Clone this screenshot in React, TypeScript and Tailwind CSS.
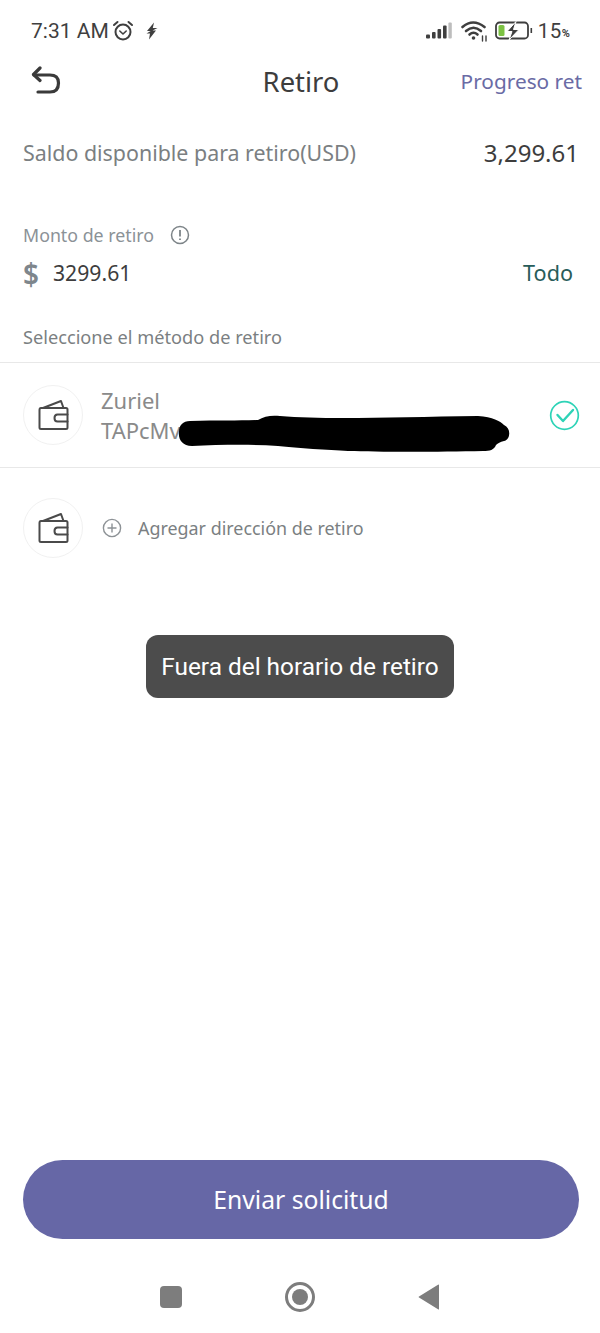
export default function App() {
  const Wallet = () => (
    <svg width="32" height="32" viewBox="0 0 32 32" fill="none" stroke="#4a4a4a" strokeWidth="2" strokeLinejoin="round" strokeLinecap="round">
      <path d="M2.5 11 L2.5 28.5 Q2.5 30 4 30 L29 30 Q30.5 30 30.5 28.5 L30.5 10.5 Q30.5 9 29 9 L4 9 Q2.5 9 2.5 11 Z" />
      <path d="M6 9 L24 2 L26.5 9" />
      <path d="M30.5 15.5 L20.5 15.5 Q17.5 15.5 17.5 19 Q17.5 22.5 20.5 22.5 L30.5 22.5" />
    </svg>
  );
  return (
    <div className="relative flex h-[1333px] w-[600px] flex-col overflow-hidden bg-white font-['Noto_Sans',sans-serif]">
      <div className="flex h-[61px] items-center justify-between pl-[31px] pr-[30px] pt-[1px] font-['Roboto',sans-serif] text-[#3f3f3f]">
        <div className="flex items-center">
          <span className="text-[21px] leading-none">7:31 AM</span>
          <svg className="ml-[3px]" width="22" height="22" viewBox="0 0 22 22" fill="none" stroke="#3f3f3f" strokeWidth="2" strokeLinecap="round" strokeLinejoin="round">
            <circle cx="11" cy="12" r="7.5" />
            <path d="M2 5 L5.5 2 M20 5 L16.5 2" />
            <path d="M7.8 11 L11 14 L14.2 11" strokeWidth="1.6" />
          </svg>
          <svg className="ml-[12px]" width="12" height="18" viewBox="0 0 12 18" fill="#3f3f3f">
            <path d="M8 0.5 L1 9 L4.7 9 L0.5 11.5 L4 11.5 L3 17.5 L10 8.5 L6.5 8.5 L11.5 6 L6.8 6 Z" />
          </svg>
        </div>
        <div className="flex items-center">
          <svg width="26" height="18" viewBox="0 0 26 18" fill="#3f3f3f">
            <rect x="0" y="12.5" width="4" height="4" rx="1" />
            <rect x="6" y="10" width="3.6" height="6.5" rx="1" />
            <rect x="11.5" y="7" width="3.6" height="9.5" rx="1" />
            <rect x="17" y="3.5" width="3.6" height="13" rx="1" />
            <rect x="22.4" y="0.5" width="3.4" height="16" rx="1" fill="#bdbdbd" />
          </svg>
          <svg className="ml-[9px]" width="28" height="22" viewBox="0 0 28 22" fill="none" stroke="#3f3f3f" strokeWidth="2.6" strokeLinecap="round">
            <path d="M1.5 7 Q12 -2 23.5 7" />
            <path d="M5 11 Q12.5 4.5 20 11" />
            <path d="M8.5 14.5 Q12.5 11 16.5 14.5" />
            <circle cx="12.5" cy="18" r="1.8" fill="#3f3f3f" stroke="none" />
            <path d="M21.5 16 V21 M25 16 V21" strokeWidth="1.4" />
          </svg>
          <svg className="ml-[6px]" width="38" height="20" viewBox="0 0 38 20" fill="none">
            <rect x="1" y="1.5" width="32" height="16" rx="3.5" stroke="#3f3f3f" strokeWidth="1.8" />
            <rect x="3.5" y="4" width="6" height="11" rx="1.5" fill="#7cc243" />
            <path d="M21 0.5 L12 10.5 L17 10.5 L14 19 L24 8.5 L18.5 8.5 Z" fill="#3f3f3f" stroke="#ffffff" strokeWidth="1" />
            <rect x="35.5" y="7" width="1.6" height="5" fill="#3f3f3f" />
          </svg>
          <span className="ml-[5px] text-[20.5px] leading-none tracking-[0.5px]">15</span>
          <span className="mt-[5px] text-[11px] font-bold leading-none">%</span>
        </div>
      </div>

      <div className="relative flex h-[40px] items-center justify-center pl-[2px] pt-[2px]">
        <svg className="absolute left-[31px] top-[5px]" width="30" height="30" viewBox="0 0 30 30" fill="none" stroke="#3a3a3a" strokeWidth="3.2" strokeLinecap="round" strokeLinejoin="round">
          <path d="M9 2 L2.5 8.5 L9 14.5" />
          <path d="M3 9 L19 9 Q27.5 9 27.5 17 Q27.5 26 19 26 L7 26" />
        </svg>
        <h1 className="text-[27.4px] font-normal leading-none text-[#3d3d3d]">Retiro</h1>
        <span className="absolute right-[18px] top-[10px] text-[20.8px] leading-none text-[#6a6ba5]">Progreso ret</span>
      </div>

      <div className="mt-[37px] flex items-center justify-between pl-[23px] pr-[21px]">
        <span className="text-[21.4px] leading-[30px] text-[#7b7f82]">Saldo disponible para retiro(USD)</span>
        <span className="text-[24px] leading-[30px] text-[#3d3d3d]">3,299.61</span>
      </div>

      <div className="mt-[54px] flex items-center pl-[23px]">
        <span className="text-[17.8px] leading-[26px] text-[#8b9297]">Monto de retiro</span>
        <svg className="ml-[16px]" width="20" height="20" viewBox="0 0 20 20" fill="none" stroke="#7d8488" strokeWidth="1.5">
          <circle cx="10" cy="10" r="8.5" />
          <path d="M10 5 V11.5" strokeWidth="1.8" />
          <path d="M10 13.5 V15" strokeWidth="1.8" />
        </svg>
      </div>

      <div className="mt-[10px] flex items-center justify-between pl-[23px] pr-[27px]">
        <div className="flex items-center">
          <span className="w-[30px] origin-left scale-x-90 text-[31px] font-semibold leading-[30px] text-[#7e868c]">$</span>
          <span className="text-[21.2px] leading-[30px] text-[#3d3d3d]">3299.61</span>
        </div>
        <span className="text-[21.6px] leading-[30px] text-[#285c5a]">Todo</span>
      </div>

      <div className="mt-[36px] pl-[23px] text-[18.2px] leading-[26px] text-[#7b7f82]">Seleccione el método de retiro</div>

      <div className="relative mt-[12px] flex h-[106px] items-center border-y border-[#e8e8e8] pl-[23px] pr-[20px]">
        <div className="flex h-[60px] w-[60px] shrink-0 items-center justify-center rounded-full border border-[#f1f1f1]">
          <Wallet />
        </div>
        <div className="ml-[18px] flex flex-col">
          <span className="text-[22px] leading-[30px] text-[#8a8a8a]">Zuriel</span>
          <span className="text-[22px] leading-[30px] text-[#8a8a8a]">TAPcMv</span>
        </div>
        <svg className="ml-auto" width="31" height="31" viewBox="0 0 31 31" fill="none" stroke="#2ed3b7" strokeLinecap="round" strokeLinejoin="round">
          <circle cx="15.5" cy="15.5" r="13.8" strokeWidth="1.7" />
          <path d="M8.5 15 L14 21 L24 10" strokeWidth="2.4" />
        </svg>
        <svg className="absolute left-[178px] top-[52px]" width="334" height="38" viewBox="0 0 334 38" fill="#000000">
          <path d="M12 6 C40 5 60 6 80 5 C86 1 94 0 102 1 C150 5 220 2 300 1 C315 2 322 6 326 10 C333 13 333 24 326 26 C322 27 320 28 318 30 C316 35 312 36 305 36 C260 37 200 37 170 36 C150 35 120 33 100 31 C70 29 40 30 14 31 C4 31 0 24 1 17 C1 10 5 6 12 6 Z" />
        </svg>
      </div>

      <div className="flex h-[119px] items-center pl-[23px]">
        <div className="flex h-[60px] w-[60px] shrink-0 items-center justify-center rounded-full border border-[#f1f1f1]">
          <Wallet />
        </div>
        <svg className="ml-[19px]" width="20" height="20" viewBox="0 0 20 20" fill="none" stroke="#8d9296" strokeWidth="1.4">
          <circle cx="10" cy="10" r="8.6" />
          <path d="M10 5.5 V14.5 M5.5 10 H14.5" />
        </svg>
        <span className="ml-[16px] text-[17.9px] leading-[26px] text-[#7b7f82]">Agregar dirección de retiro</span>
      </div>

      <div className="absolute left-[146px] top-[635px] flex h-[63px] w-[308px] items-center justify-center rounded-[12px] bg-[#4c4c4c] pt-[2px] font-['Roboto',sans-serif] text-[24.4px] text-white">
        Fuera del horario de retiro
      </div>

      <div className="mt-auto pl-[23px] pr-[21px]">
        <button className="flex h-[79px] w-full items-center justify-center rounded-full bg-[#6667a6] text-[24.7px] text-white">Enviar solicitud</button>
      </div>

      <div className="flex h-[94px] items-center justify-center pt-[22px]">
        <div className="h-[22px] w-[22px] rounded-[4px] bg-[#7d7d7d]" />
        <div className="ml-[103px] flex h-[30px] w-[30px] items-center justify-center rounded-full border-[3px] border-[#7d7d7d]">
          <div className="h-[16px] w-[16px] rounded-full bg-[#7d7d7d]" />
        </div>
        <svg className="ml-[103px]" width="22" height="26" viewBox="0 0 22 26" fill="#7d7d7d">
          <path d="M21 1 L21 25 Q21 26 20 25.2 L1 13.5 Q0 13 1 12.5 L20 0.8 Q21 0 21 1 Z" />
        </svg>
      </div>
    </div>
  );
}
